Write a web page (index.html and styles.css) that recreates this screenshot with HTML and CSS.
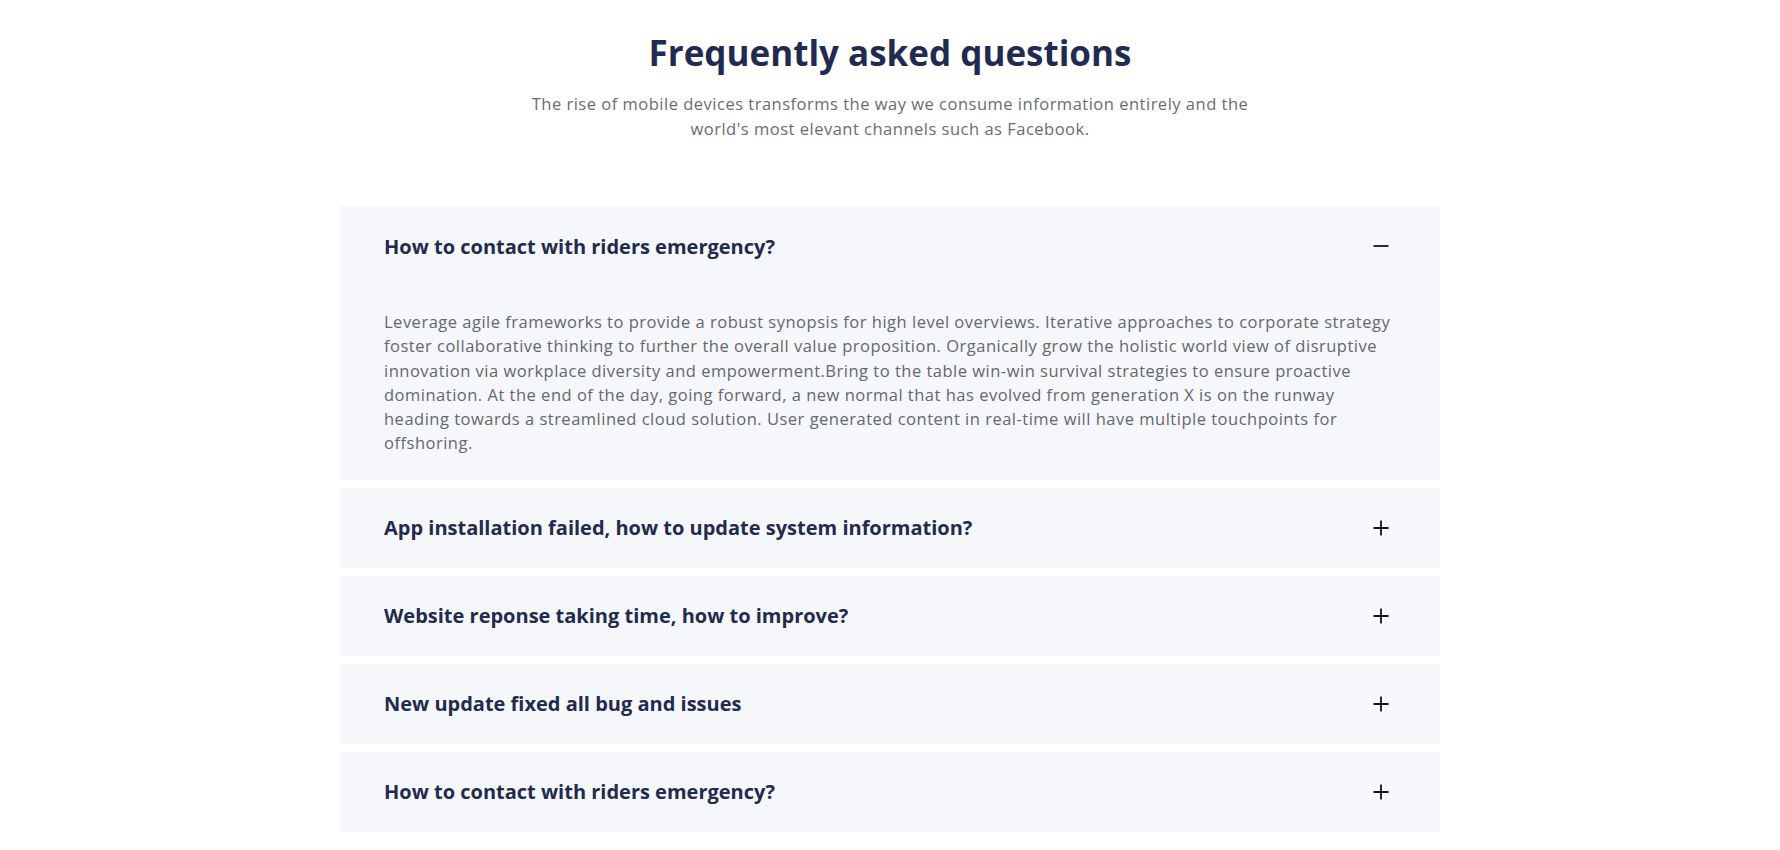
FILE: index.html
```html
<!DOCTYPE html>
<html lang="en">
<head>
<meta charset="utf-8">
<title>FAQ</title>
<link rel="stylesheet" href="styles.css">
</head>
<body>
<section class="faq">
  <header class="faq-head">
    <h1 class="faq-title">Frequently asked questions</h1>
    <p class="faq-sub">The rise of mobile devices transforms the way we consume information entirely and the world's most elevant channels such as Facebook.</p>
  </header>
  <div class="faq-list">
    <div class="faq-item open">
      <div class="faq-q">
        <span class="faq-q-text">How to contact with riders emergency?</span>
        <svg class="faq-icon" width="16" height="16" viewBox="0 0 16 16"><path d="M0.5 8H15.5" stroke="#151515" stroke-width="1.8"/></svg>
      </div>
      <div class="faq-a">Leverage agile frameworks to provide a robust synopsis for high level overviews. Iterative approaches to corporate strategy foster collaborative thinking to further the overall value proposition. Organically grow the holistic world view of disruptive innovation via workplace diversity and empowerment.Bring to the table win-win survival strategies to ensure proactive domination. At the end of the day, going forward, a new normal that has evolved from generation X is on the runway heading towards a streamlined cloud solution. User generated content in real-time will have multiple touchpoints for offshoring.</div>
    </div>
    <div class="faq-item">
      <div class="faq-q">
        <span class="faq-q-text">App installation failed, how to update system information?</span>
        <svg class="faq-icon" width="16" height="16" viewBox="0 0 16 16"><path d="M0.5 8H15.5M8 0.5V15.5" stroke="#151515" stroke-width="1.8"/></svg>
      </div>
    </div>
    <div class="faq-item">
      <div class="faq-q">
        <span class="faq-q-text">Website reponse taking time, how to improve?</span>
        <svg class="faq-icon" width="16" height="16" viewBox="0 0 16 16"><path d="M0.5 8H15.5M8 0.5V15.5" stroke="#151515" stroke-width="1.8"/></svg>
      </div>
    </div>
    <div class="faq-item">
      <div class="faq-q">
        <span class="faq-q-text">New update fixed all bug and issues</span>
        <svg class="faq-icon" width="16" height="16" viewBox="0 0 16 16"><path d="M0.5 8H15.5M8 0.5V15.5" stroke="#151515" stroke-width="1.8"/></svg>
      </div>
    </div>
    <div class="faq-item">
      <div class="faq-q">
        <span class="faq-q-text">How to contact with riders emergency?</span>
        <svg class="faq-icon" width="16" height="16" viewBox="0 0 16 16"><path d="M0.5 8H15.5M8 0.5V15.5" stroke="#151515" stroke-width="1.8"/></svg>
      </div>
    </div>
  </div>
</section>
</body>
</html>
```
FILE: styles.css
```css
* { box-sizing: border-box; }
html, body { margin: 0; padding: 0; background: #ffffff; }
body {
  font-family: "Open Sans", "Liberation Sans", sans-serif;
  color: #23294a;
}
.faq {
  padding-top: 31px;
}
.faq-head {
  text-align: center;
}
.faq-title {
  margin: 0;
  font-size: 35px;
  line-height: 44px;
  font-weight: 700;
  color: #222b4f;
}
.faq-sub {
  margin: 16px auto 0;
  max-width: 740px;
  font-size: 16.5px;
  letter-spacing: 0.5px;
  line-height: 25px;
  color: #6a6c72;
}
.faq-list {
  width: 1100px;
  margin: 65px auto 0;
  display: flex;
  flex-direction: column;
  gap: 8px;
}
.faq-item {
  background: #f5f7fa;
}
.faq-q {
  height: 80px;
  padding: 0 51px 0 44px;
  display: flex;
  align-items: center;
  justify-content: space-between;
}
.faq-q-text {
  font-size: 20px;
  font-weight: 700;
  color: #232b4c;
}
.faq-icon { display: block; flex: none; }
.faq-a {
  padding: 24px 44px 24px 44px;
  font-size: 16.5px;
  letter-spacing: 0.5px;
  line-height: 24.3px;
  color: #64676e;
}
```
